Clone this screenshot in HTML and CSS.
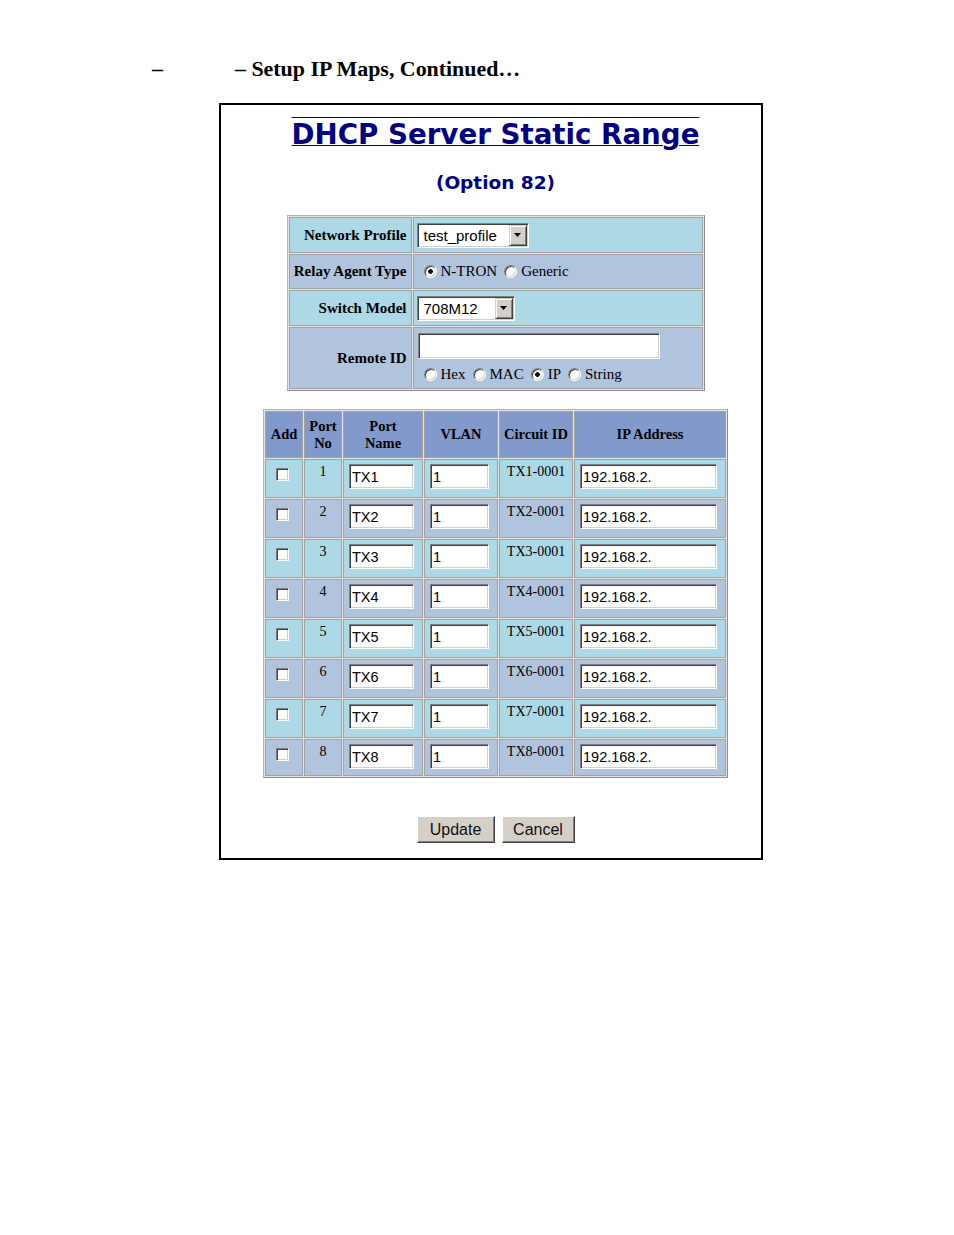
FILE: index.html
```html
<!DOCTYPE html>
<html>
<head>
<meta charset="utf-8">
<title>DHCP Server Static Range</title>
<link rel="stylesheet" href="styles.css">
</head>
<body>
<div class="doc-heading"><span class="dash">–</span><span class="doc-title">– Setup IP Maps, Continued…</span></div>
<div class="frame">
  <h1 class="page-title">DHCP Server Static Range</h1>
  <p class="subtitle">(Option 82)</p>

  <div class="profile">
    <div class="cell label lb">Network Profile</div>
    <div class="cell value lb">
      <div class="select sel-profile"><span class="sel-text">test_profile</span><span class="sel-btn"><svg width="7" height="4" viewBox="0 0 7 4"><polygon points="0,0 7,0 3.5,4" fill="#000"/></svg></span></div>
    </div>

    <div class="cell label ls">Relay Agent Type</div>
    <div class="cell value ls radios">
      <label class="opt"><input type="radio" name="relay" class="radio" checked>N-TRON</label>
      <label class="opt"><input type="radio" name="relay" class="radio">Generic</label>
    </div>

    <div class="cell label lb">Switch Model</div>
    <div class="cell value lb">
      <div class="select sel-model"><span class="sel-text">708M12</span><span class="sel-btn"><svg width="7" height="4" viewBox="0 0 7 4"><polygon points="0,0 7,0 3.5,4" fill="#000"/></svg></span></div>
    </div>

    <div class="cell label ls">Remote ID</div>
    <div class="cell value ls remote">
      <input type="text" class="field remote-field" value="">
      <div class="radios remote-radios">
        <label class="opt"><input type="radio" name="rid" class="radio">Hex</label>
        <label class="opt"><input type="radio" name="rid" class="radio">MAC</label>
        <label class="opt"><input type="radio" name="rid" class="radio" checked>IP</label>
        <label class="opt"><input type="radio" name="rid" class="radio">String</label>
      </div>
    </div>
  </div>

  <div class="ports">
    <div class="cell hd">Add</div>
    <div class="cell hd">Port<br>No</div>
    <div class="cell hd">Port<br>Name</div>
    <div class="cell hd">VLAN</div>
    <div class="cell hd">Circuit ID</div>
    <div class="cell hd">IP Address</div>

    <div class="cell lb c-add"><input type="checkbox" class="check"></div>
    <div class="cell lb c-txt">1</div>
    <div class="cell lb c-in"><input type="text" class="field f-name" value="TX1"></div>
    <div class="cell lb c-in"><input type="text" class="field f-vlan" value="1"></div>
    <div class="cell lb c-txt">TX1-0001</div>
    <div class="cell lb c-in"><input type="text" class="field f-ip" value="192.168.2."></div>

    <div class="cell ls c-add"><input type="checkbox" class="check"></div>
    <div class="cell ls c-txt">2</div>
    <div class="cell ls c-in"><input type="text" class="field f-name" value="TX2"></div>
    <div class="cell ls c-in"><input type="text" class="field f-vlan" value="1"></div>
    <div class="cell ls c-txt">TX2-0001</div>
    <div class="cell ls c-in"><input type="text" class="field f-ip" value="192.168.2."></div>

    <div class="cell lb c-add"><input type="checkbox" class="check"></div>
    <div class="cell lb c-txt">3</div>
    <div class="cell lb c-in"><input type="text" class="field f-name" value="TX3"></div>
    <div class="cell lb c-in"><input type="text" class="field f-vlan" value="1"></div>
    <div class="cell lb c-txt">TX3-0001</div>
    <div class="cell lb c-in"><input type="text" class="field f-ip" value="192.168.2."></div>

    <div class="cell ls c-add"><input type="checkbox" class="check"></div>
    <div class="cell ls c-txt">4</div>
    <div class="cell ls c-in"><input type="text" class="field f-name" value="TX4"></div>
    <div class="cell ls c-in"><input type="text" class="field f-vlan" value="1"></div>
    <div class="cell ls c-txt">TX4-0001</div>
    <div class="cell ls c-in"><input type="text" class="field f-ip" value="192.168.2."></div>

    <div class="cell lb c-add"><input type="checkbox" class="check"></div>
    <div class="cell lb c-txt">5</div>
    <div class="cell lb c-in"><input type="text" class="field f-name" value="TX5"></div>
    <div class="cell lb c-in"><input type="text" class="field f-vlan" value="1"></div>
    <div class="cell lb c-txt">TX5-0001</div>
    <div class="cell lb c-in"><input type="text" class="field f-ip" value="192.168.2."></div>

    <div class="cell ls c-add"><input type="checkbox" class="check"></div>
    <div class="cell ls c-txt">6</div>
    <div class="cell ls c-in"><input type="text" class="field f-name" value="TX6"></div>
    <div class="cell ls c-in"><input type="text" class="field f-vlan" value="1"></div>
    <div class="cell ls c-txt">TX6-0001</div>
    <div class="cell ls c-in"><input type="text" class="field f-ip" value="192.168.2."></div>

    <div class="cell lb c-add"><input type="checkbox" class="check"></div>
    <div class="cell lb c-txt">7</div>
    <div class="cell lb c-in"><input type="text" class="field f-name" value="TX7"></div>
    <div class="cell lb c-in"><input type="text" class="field f-vlan" value="1"></div>
    <div class="cell lb c-txt">TX7-0001</div>
    <div class="cell lb c-in"><input type="text" class="field f-ip" value="192.168.2."></div>

    <div class="cell ls c-add"><input type="checkbox" class="check"></div>
    <div class="cell ls c-txt">8</div>
    <div class="cell ls c-in"><input type="text" class="field f-name" value="TX8"></div>
    <div class="cell ls c-in"><input type="text" class="field f-vlan" value="1"></div>
    <div class="cell ls c-txt">TX8-0001</div>
    <div class="cell ls c-in"><input type="text" class="field f-ip" value="192.168.2."></div>
  </div>

  <div class="actions">
    <button type="button" class="btn btn-update">Update</button>
    <button type="button" class="btn btn-cancel">Cancel</button>
  </div>
</div>
</body>
</html>
```

FILE: styles.css
```css
body {
  margin: 0;
  background: #fff;
  color: #000;
  font-family: "Liberation Serif", serif;
}

.doc-heading {
  display: flex;
  padding: 57px 0 0 152px;
  font: bold 21.9px/24px "Liberation Serif", serif;
}
.dash { width: 83px; }

.frame {
  margin: 22px 0 0 219px;
  width: 544px;
  height: 757px;
  box-sizing: border-box;
  border: 2px solid #000;
  padding: 13px 0 0 9px;
}

.page-title {
  margin: 0;
  text-align: center;
  font: bold 27.7px/33px "DejaVu Sans", sans-serif;
  color: #000080;
  text-decoration: underline overline;
  text-decoration-thickness: 1px;
}

.subtitle {
  margin: 21px 0 0;
  text-align: center;
  font: bold 18.5px/22px "DejaVu Sans", sans-serif;
  color: #000080;
}

/* shared cell styles */
.profile,
.ports {
  display: grid;
  gap: 1px;
  padding: 1px;
  border: 1px solid;
  border-color: #b4b4b4 #8c8c8c #8c8c8c #b4b4b4;
  background: #e4e4e4;
  width: fit-content;
  margin-left: auto;
  margin-right: auto;
}
.cell {
  box-sizing: border-box;
  border: 1px solid #a2a2a2;
}
.lb { background: #add8e6; }
.ls { background: #b0c4de; }

/* profile table */
.profile {
  margin-top: 21px;
  grid-template-columns: 123px 290px;
  grid-template-rows: 36px 35px 36px 62px;
}
.label {
  display: flex;
  align-items: center;
  justify-content: flex-end;
  padding-right: 4px;
  font: bold 15px/17px "Liberation Serif", serif;
  white-space: nowrap;
}
.value {
  display: flex;
  align-items: center;
  padding-left: 3px;
}
.radios {
  display: flex;
  align-items: center;
  gap: 7px;
  font: 15px/17px "Liberation Serif", serif;
}
.value.radios { padding-left: 10px; }
.opt {
  display: inline-flex;
  align-items: center;
}
.remote {
  flex-direction: column;
  align-items: flex-start;
  justify-content: flex-start;
  padding: 5px 0 0 4px;
}
.remote-radios {
  margin: 7px 0 0 6px;
}

/* windows-classic controls */
.select {
  display: inline-flex;
  align-items: center;
  height: 25px;
  box-sizing: border-box;
  background: #fff;
  border: 1px solid;
  border-color: #808080 #fff #fff #808080;
  box-shadow: inset 1px 1px 0 #404040, inset -1px -1px 0 #d4d0c8;
  padding: 1px;
}
.sel-profile { width: 112px; }
.sel-model { width: 98px; }
.sel-text {
  flex: 1;
  padding-left: 5px;
  font: 15px/19px "Liberation Sans", sans-serif;
}
.sel-btn {
  display: flex;
  align-items: center;
  justify-content: center;
  width: 18px;
  height: 21px;
  box-sizing: border-box;
  background: #d4d0c8;
  border: 1px solid;
  border-color: #d4d0c8 #404040 #404040 #d4d0c8;
  box-shadow: inset 1px 1px 0 #fff, inset -1px -1px 0 #808080;
}

.field {
  box-sizing: border-box;
  height: 25px;
  margin: 0;
  padding: 0 2px;
  background: #fff;
  border: 1px solid;
  border-color: #808080 #fff #fff #808080;
  box-shadow: inset 1px 1px 0 #404040, inset -1px -1px 0 #d4d0c8;
  font: 14.5px "Liberation Sans", sans-serif;
  color: #000;
  outline: none;
}
.remote-field { width: 242px; height: 26px; }
.f-name { width: 65px; }
.f-vlan { width: 59px; }
.f-ip { width: 137px; }

.radio,
.check {
  appearance: none;
  -webkit-appearance: none;
  margin: 0;
  box-sizing: border-box;
  background: #fff;
  border: 1px solid;
  border-color: #808080 #fff #fff #808080;
  box-shadow: inset 1px 1px 0 #404040, inset -1px -1px 0 #d4d0c8;
}
.radio {
  width: 13px;
  height: 13px;
  border-radius: 50%;
  margin-right: 4px;
}
.radio:checked {
  background: radial-gradient(circle, #000 0 2px, #fff 2.6px);
}
.check {
  display: block;
  width: 13px;
  height: 13px;
}

/* ports table */
.ports {
  margin-top: 18px;
  grid-template-columns: 38px 38px 80px 74px 74px 152px;
  grid-template-rows: 47px repeat(7, 39px) 37px;
}
.hd {
  display: flex;
  align-items: center;
  justify-content: center;
  text-align: center;
  background: #8199cb;
  font: bold 14.5px/17px "Liberation Serif", serif;
  white-space: nowrap;
}
.c-add {
  display: flex;
  justify-content: flex-start;
  padding: 8px 0 0 10px;
}
.c-txt {
  text-align: center;
  padding-top: 4px;
  font: 14px/16px "Liberation Serif", serif;
  white-space: nowrap;
}
.c-in {
  padding: 4px 0 0 5px;
}

/* buttons */
.actions {
  display: flex;
  justify-content: center;
  gap: 7px;
  margin-top: 38px;
}
.btn {
  height: 27px;
  box-sizing: border-box;
  padding: 0;
  background: #d4d0c8;
  border: 1px solid;
  border-color: #fff #404040 #404040 #fff;
  box-shadow: inset -1px -1px 0 #808080;
  font: 16px "Liberation Sans", sans-serif;
  color: #111;
}
.btn-update { width: 78px; }
.btn-cancel { width: 73px; }
```
